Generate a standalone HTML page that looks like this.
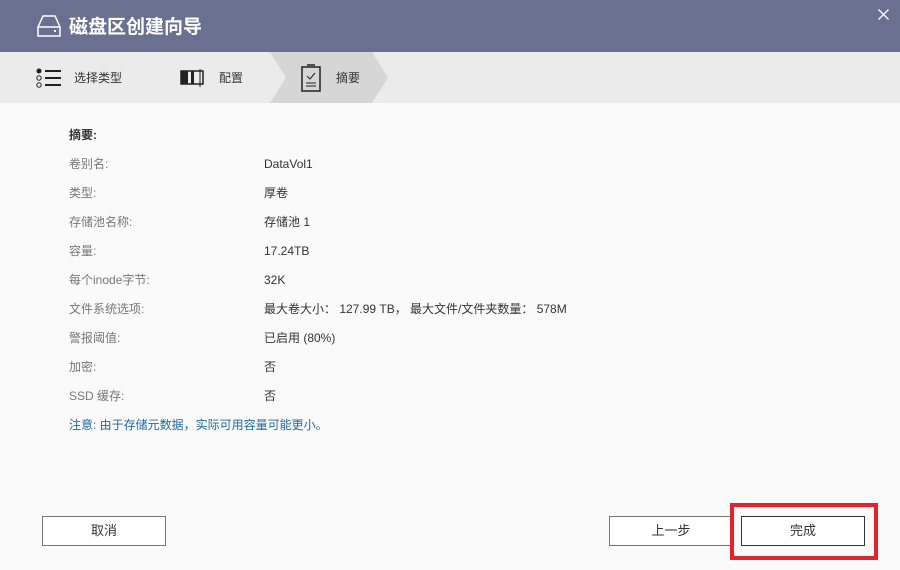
<!DOCTYPE html>
<html><head><meta charset="utf-8"><style>
*{margin:0;padding:0;box-sizing:border-box}
body{width:900px;height:570px;background:#fafafa;font-family:"Liberation Sans","Noto Sans CJK SC",sans-serif;position:relative;overflow:hidden;font-size:12px}
.hdr{position:absolute;left:0;top:0;width:900px;height:52px;background:#6a7190;color:#fff}
.hdr .t{position:absolute;left:69px;top:12px;font-size:19px;font-weight:bold}
.steps{position:absolute;left:0;top:52px;width:900px;height:51px;background:#ebebeb}
.lbl{position:absolute;font-size:12px;color:#333}
.row,.val{position:absolute;height:17px;line-height:17px;white-space:nowrap}
.row{left:69px;color:#777}
.val{left:264px;color:#333}
.btn{position:absolute;top:516px;height:30px;border:1px solid #777;background:#fff;text-align:center;line-height:28px;font-size:13px;color:#333}
</style></head><body>
<div class="hdr">
<svg style="position:absolute;left:36px;top:14px" width="26" height="24" viewBox="0 0 26 24" fill="none" stroke="#fff" stroke-width="1.5"><path d="M2 13 L7 2 H19 L24 13 V22 H2 Z M2 13 H24"/><rect x="18" y="16" width="2" height="2" fill="#fff" stroke="none"/></svg>
<div class="t">磁盘区创建向导</div>
<svg style="position:absolute;left:878px;top:9px" width="11" height="11" stroke="#fff" stroke-width="1.3"><path d="M0.5 0.5L10.5 10.5M10.5 0.5L0.5 10.5"/></svg>
</div>
<div class="steps">
<svg style="position:absolute;left:270px;top:0" width="120" height="51"><polygon points="0,0 102,0 118,25.5 102,51 0,51 16,25.5" fill="#d6d6d6"/></svg>
<svg style="position:absolute;left:36px;top:16px" width="26" height="20"><circle cx="3" cy="3" r="2.5" fill="#222"/><circle cx="3" cy="10" r="2.2" fill="none" stroke="#222"/><circle cx="3" cy="17" r="2.2" fill="none" stroke="#222"/><path d="M9 3H25M9 10H25M9 17H25" stroke="#222" stroke-width="2"/></svg>
<div class="lbl" style="left:74px;top:17px">选择类型</div>
<svg style="position:absolute;left:180px;top:17px" width="26" height="18"><rect x="1" y="2" width="22" height="13" fill="none" stroke="#222" stroke-width="1.5"/><rect x="1" y="2" width="7" height="13" fill="#222"/><rect x="11" y="2" width="3" height="13" fill="#222"/><path d="M20 0V18" stroke="#222"/></svg>
<div class="lbl" style="left:219px;top:17px">配置</div>
<svg style="position:absolute;left:300px;top:12px" width="22" height="28" fill="none" stroke="#222"><rect x="2" y="3" width="18" height="24" stroke-width="1.5"/><path d="M7 1H15" stroke-width="1.5"/><path d="M7 12L10 15L15 9M6 19H16M6 22H16"/></svg>
<div class="lbl" style="left:336px;top:17px">摘要</div>
</div>
<div class="row" style="top:127px;color:#333;font-weight:bold">摘要:</div>
<div class="row" style="top:156px">卷别名:</div><div class="val" style="top:156px">DataVol1</div>
<div class="row" style="top:185px">类型:</div><div class="val" style="top:185px">厚卷</div>
<div class="row" style="top:214px">存储池名称:</div><div class="val" style="top:214px">存储池 1</div>
<div class="row" style="top:243px">容量:</div><div class="val" style="top:243px">17.24TB</div>
<div class="row" style="top:272px">每个inode字节:</div><div class="val" style="top:272px">32K</div>
<div class="row" style="top:301px">文件系统选项:</div><div class="val" style="top:301px">最大卷大小： 127.99 TB， 最大文件/文件夹数量： 578M</div>
<div class="row" style="top:330px">警报阈值:</div><div class="val" style="top:330px">已启用 (80%)</div>
<div class="row" style="top:359px">加密:</div><div class="val" style="top:359px">否</div>
<div class="row" style="top:388px">SSD 缓存:</div><div class="val" style="top:388px">否</div>
<div class="row" style="top:417px;color:#1e6aa0">注意: 由于存储元数据，实际可用容量可能更小。</div>
<div class="btn" style="left:42px;width:124px">取消</div>
<div class="btn" style="left:609px;width:124px">上一步</div>
<div style="position:absolute;left:730px;top:503px;width:148px;height:57px;border:4px solid #e8202a;background:#fafafa"></div>
<div class="btn" style="left:741px;width:124px;border-color:#333">完成</div>
</body></html>
